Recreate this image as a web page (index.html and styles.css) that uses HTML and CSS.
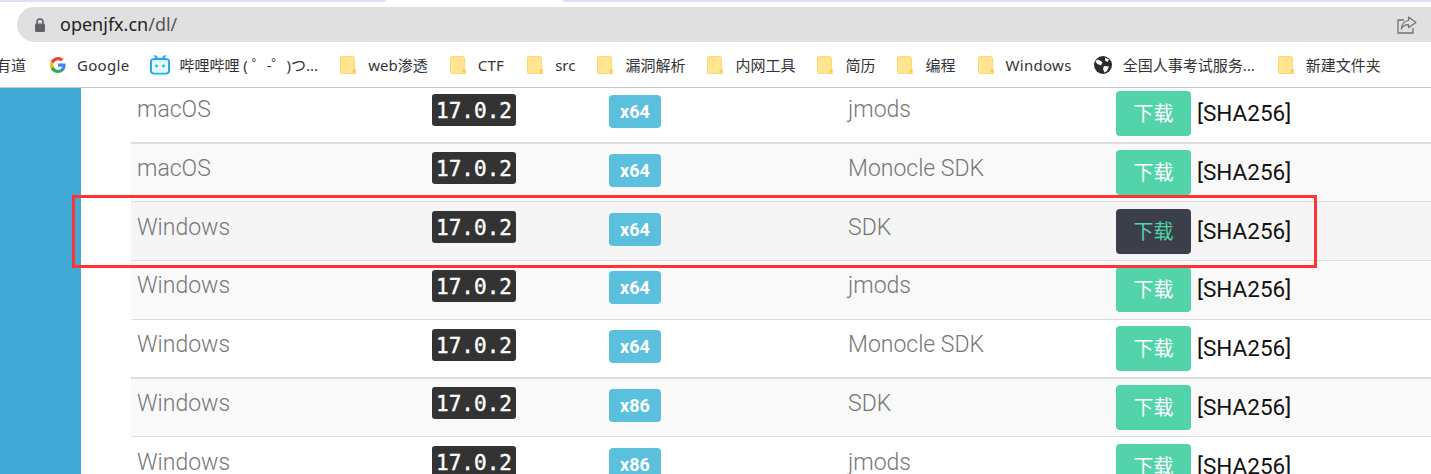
FILE: index.html
```html
<!DOCTYPE html>
<html lang="zh-CN">
<head>
<meta charset="utf-8">
<title>openjfx.cn/dl/</title>
<link rel="stylesheet" href="styles.css">
</head>
<body>
<svg class="defs" width="0" height="0" aria-hidden="true">
  <symbol id="folder" viewBox="0 0 16 18">
    <path d="M1.5 0.5H12.5Q14.5 0.5 14.5 2.5V13.5H16V17.5H1.5Q0.5 17.5 0.5 16.5V1.5Q0.5 0.5 1.5 0.5Z" fill="#ffe58f" stroke="#fbd775"/>
    <rect x="12.5" y="13" width="2.5" height="4" rx="1" fill="#f8cf5c"/>
  </symbol>
</svg>
<header class="chrome">
  <div class="tabstrip"><span class="tab tab-a"></span><span class="tab tab-b"></span></div>
  <div class="omnibox">
    <svg class="lock" viewBox="0 0 12 14" width="12" height="14"><path d="M3 6V4a3 3 0 0 1 6 0v2" fill="none" stroke="#5f6368" stroke-width="1.6"/><rect x="1" y="5.5" width="10" height="8.5" rx="1.5" fill="#5f6368"/></svg>
    <span class="url"><span class="host">openjfx.cn</span>/dl/</span>
    <svg class="share" viewBox="0 0 20 18" width="20" height="18"><path d="M7 4H1V17H16V12" fill="none" stroke="#6f7276" stroke-width="1.3"/><path d="M11.5 1L19 6.5L11.5 11.5V8.7C8 8.7 5.7 10 4.3 13C4.6 8.300 7.500 5 11.5 4.500Z" fill="none" stroke="#6f7276" stroke-width="1.2" stroke-linejoin="round"/></svg>
  </div>
  <nav class="bookmarks">
    <span class="bm bm-first">有道</span>
    <span class="bm bm-google"><svg class="ico" viewBox="0 0 18 18"><path fill="#4285f4" d="M17.600 9.200c0-.6-.1-1.200-.2-1.800H9v3.500h4.800a4.100 4.100 0 0 1-1.800 2.700v2.200h2.900c1.700-1.600 2.700-3.900 2.700-6.600z"/><path fill="#34a853" d="M9 18c2.400 0 4.500-.8 5.900-2.200L12 13.600c-.8.500-1.800.9-3 .9-2.300 0-4.300-1.600-5-3.700H1v2.300A9 9 0 0 0 9 18z"/><path fill="#fbbc05" d="M4 10.800a5.400 5.400 0 0 1 0-3.500V4.900H1a9 9 0 0 0 0 8.200z"/><path fill="#ea4335" d="M9 3.600c1.300 0 2.500.5 3.400 1.300L15 2.400A9 9 0 0 0 1 4.900l3 2.400c.7-2.100 2.700-3.700 5-3.700z"/></svg><span class="latin">Google</span></span>
    <span class="bm bm-bili"><svg class="ico ico-bili" viewBox="0 0 20 20"><path d="M5 1L8 4M15 1L12 4" stroke="#23ade5" stroke-width="1.800" stroke-linecap="round"/><rect x="1" y="4" width="18" height="14.500" rx="3" fill="none" stroke="#23ade5" stroke-width="2"/><rect x="2" y="5" width="16" height="12.500" rx="2" fill="#e6f7fd"/><circle cx="6.500" cy="11" r="1.400" fill="#23ade5"/><circle cx="13.500" cy="11" r="1.400" fill="#23ade5"/></svg>哔哩哔哩 ( ゜-゜)つ...</span>
    <span class="bm"><svg class="ico"><use href="#folder"/></svg>web渗透</span>
    <span class="bm bm-ctf"><svg class="ico"><use href="#folder"/></svg><span class="latin">CTF</span></span>
    <span class="bm"><svg class="ico"><use href="#folder"/></svg>src</span>
    <span class="bm"><svg class="ico"><use href="#folder"/></svg>漏洞解析</span>
    <span class="bm"><svg class="ico"><use href="#folder"/></svg>内网工具</span>
    <span class="bm"><svg class="ico"><use href="#folder"/></svg>简历</span>
    <span class="bm"><svg class="ico"><use href="#folder"/></svg>编程</span>
    <span class="bm"><svg class="ico"><use href="#folder"/></svg><span class="latin">Windows</span></span>
    <span class="bm bm-globe"><svg class="ico ico-globe" viewBox="0 0 18 18"><circle cx="9" cy="9" r="9" fill="#2b2b2b"/><path d="M3 3.500C5.500 4 7.500 5 8.500 6.500L7 9.500L3.500 8L1.500 6ZM11 1.500L15 3.500L13.500 6L11 4.500ZM10 10L15 10.500L13 15L10.500 16.500L9 13Z" fill="#fff"/></svg>全国人事考试服务...</span>
    <span class="bm"><svg class="ico"><use href="#folder"/></svg>新建文件夹</span>
  </nav>
</header>
<main class="page">
  <aside class="sidebar"></aside>
  <section class="table">
    <div class="row"><span class="os">macOS</span><span class="ver"><code>17.0.2</code></span><span class="arch"><b>x64</b></span><span class="kind">jmods</span><span class="dl"><a class="btn">下载</a><a class="sha">[SHA256]</a></span></div>
    <div class="row row-thick row-alt"><span class="os">macOS</span><span class="ver"><code>17.0.2</code></span><span class="arch"><b>x64</b></span><span class="kind">Monocle SDK</span><span class="dl"><a class="btn">下载</a><a class="sha">[SHA256]</a></span></div>
    <div class="row row-hover"><span class="os">Windows</span><span class="ver"><code>17.0.2</code></span><span class="arch"><b>x64</b></span><span class="kind">SDK</span><span class="dl"><a class="btn btn-dark">下载</a><a class="sha">[SHA256]</a></span></div>
    <div class="row row-alt"><span class="os">Windows</span><span class="ver"><code>17.0.2</code></span><span class="arch"><b>x64</b></span><span class="kind">jmods</span><span class="dl"><a class="btn">下载</a><a class="sha">[SHA256]</a></span></div>
    <div class="row"><span class="os">Windows</span><span class="ver"><code>17.0.2</code></span><span class="arch"><b>x64</b></span><span class="kind">Monocle SDK</span><span class="dl"><a class="btn">下载</a><a class="sha">[SHA256]</a></span></div>
    <div class="row row-thick row-alt"><span class="os">Windows</span><span class="ver"><code>17.0.2</code></span><span class="arch"><b>x86</b></span><span class="kind">SDK</span><span class="dl"><a class="btn">下载</a><a class="sha">[SHA256]</a></span></div>
    <div class="row"><span class="os">Windows</span><span class="ver"><code>17.0.2</code></span><span class="arch"><b>x86</b></span><span class="kind">jmods</span><span class="dl"><a class="btn">下载</a><a class="sha">[SHA256]</a></span></div>
  </section>
  <div class="annotation"></div>
</main>
</body>
</html>
```
FILE: styles.css
```css
* { box-sizing: border-box; }
html, body { margin: 0; height: 474px; overflow: hidden; background: #fff; }
body { font-family: "Noto Sans", "Noto Sans CJK SC", sans-serif; }
.defs { position: absolute; }

.chrome { height: 88px; border-bottom: 1px solid #c8c8c8; background: #fff; display: flex; flex-direction: column; position: relative; z-index: 2; }
.tabstrip { height: 7px; display: flex; flex: none; }
.tab { display: block; height: 2px; background: #e8d8f8; }
.tab-a { width: 386px; border-bottom-right-radius: 3px; }
.tab-b { flex: 1; margin-left: 177px; border-bottom-left-radius: 3px; }

.omnibox { margin-left: 17px; height: 35px; flex: none; background: #e0e0e0; border-radius: 18px 0 0 18px; display: flex; align-items: center; padding-left: 17px; padding-right: 14px; }
.lock { flex: none; margin-right: 14px; }
.url { font-size: 18px; color: #555; flex: 1; line-height: 35px; }
.host { color: #222; }
.share { flex: none; }

.bookmarks { flex: 1; display: flex; align-items: center; gap: 22px; margin-left: -4px; font-size: 15px; color: #333; white-space: nowrap; }
.bm { display: flex; align-items: center; gap: 12px; line-height: 20px; }
.latin { letter-spacing: .3px; }
.ico { width: 16px; height: 18px; flex: none; }
.ico-bili { width: 20px; height: 20px; }
.bm-first { margin-right: 2px; }
.bm-google { gap: 11px; margin-right: -1px; }
.bm-bili { gap: 9px; }
.bm-ctf { margin-right: 1px; }
.ico-globe { width: 18px; height: 18px; }
.bm-globe { gap: 11px; margin-right: 1px; }

.page { display: flex; height: 386px; overflow: hidden; position: relative; gap: 50px; }
.sidebar { width: 81px; flex: none; background: #42a9d4; }
.table { flex: 1; margin-top: -4.5px; }
.row { height: 58.8px; display: grid; grid-template-columns: 301px 177px 239px 268px 1fr; border-top: 1px solid #ddd; background: #fff; color: #777; }
.row-alt { background: #f9f9f9; }
.row-hover { background: #f5f5f5; }
.row-thick { box-shadow: inset 0 1px 0 #ddd; }
.os, .kind { font-family: "Roboto", sans-serif; font-weight: 300; font-size: 23px; line-height: 30px; padding-top: 10.5px; }
.os { padding-left: 6px; }
.ver { padding-top: 9px; }
code { display: inline-block; width: 84px; height: 32px; background: #333; color: #fff; border-radius: 3px; font-family: "DejaVu Sans Mono", monospace; font-size: 21px; line-height: 35px; text-align: center; font-weight: 400; -webkit-text-stroke: .4px #fff; overflow: hidden; }
.arch { padding-top: 10.5px; }
.arch b { display: inline-block; width: 52px; height: 33px; background: #5bc0de; color: #fff; border-radius: 4px; font-family: "Roboto", sans-serif; font-size: 18px; line-height: 33px; text-align: center; font-weight: 700; }
.dl { display: flex; align-items: flex-start; gap: 6px; padding-top: 6.5px; }
.btn { width: 75px; height: 45px; background: #52d3aa; color: #fff; border-radius: 4px; font-family: "Noto Sans CJK SC", sans-serif; font-size: 20px; line-height: 43px; text-align: center; font-weight: 400; }
.btn-dark { background: #3b3f4a; color: #52d3aa; }
.sha { color: #111; font-family: "Roboto", sans-serif; font-size: 22.5px; line-height: 44px; }

.annotation { position: absolute; left: 72px; top: 107px; width: 1245px; height: 73px; border: 3px solid #f33; }
```
